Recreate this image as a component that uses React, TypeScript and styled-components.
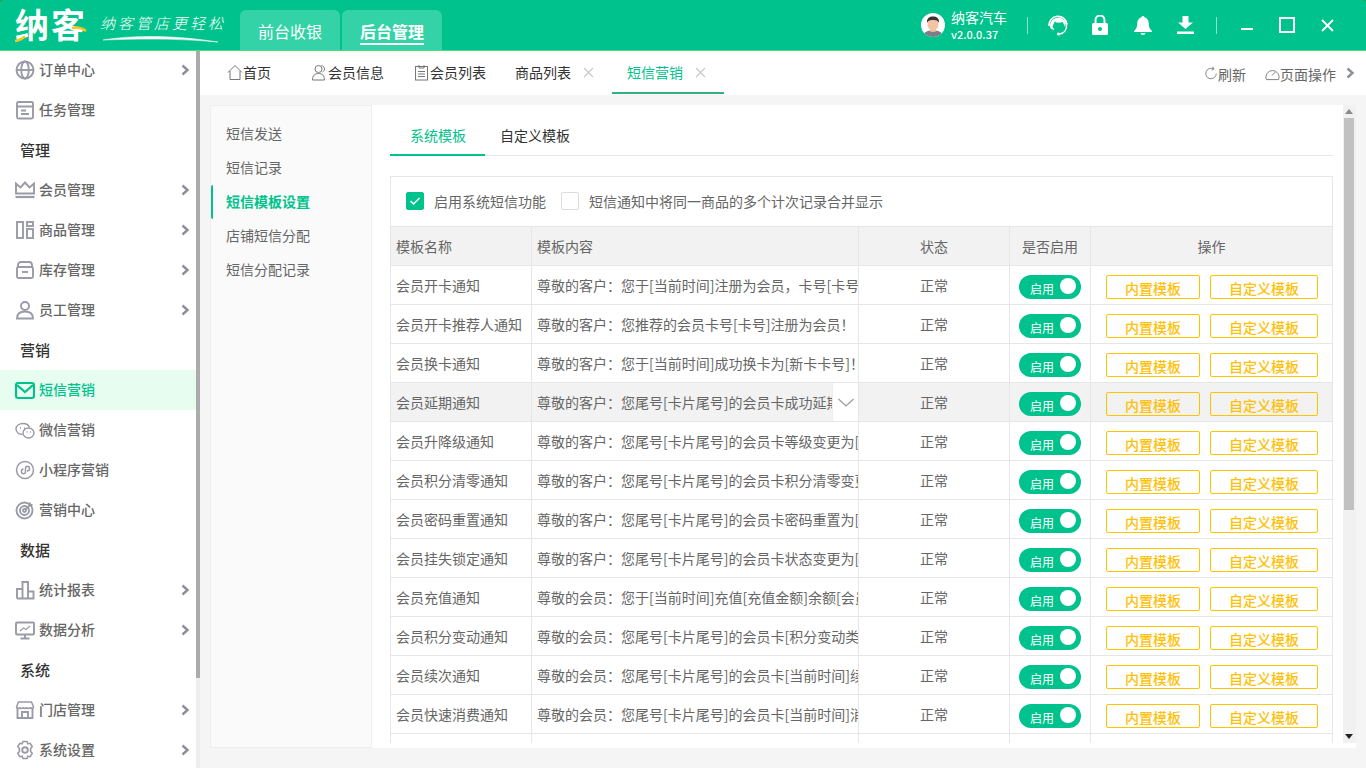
import React from 'react';
import styled, { createGlobalStyle } from 'styled-components';

const green = '#00c28c';
const line = '#e6e6e6';

const GlobalStyle = createGlobalStyle`
    html, body {
        margin: 0;
        padding: 0;
        height: 100%;
        overflow: hidden;
        background: #f5f5f5;
    }
    body {
        font-family: "Noto Sans CJK SC", "Liberation Sans", sans-serif;
        font-size: 14px;
        color: #666;
    }
    * {
        box-sizing: border-box;
    }
`;

const Page = styled.div`
    width: 1366px;
    height: 768px;
    display: flex;
    flex-direction: column;
    overflow: hidden;
`;

const HeaderShell = styled.div`
    background: #5f8a12;
    position: relative;
    z-index: 1;
`;

const Header = styled.header`
    height: 51px;
    display: flex;
    align-items: stretch;
    background: ${green};
    border-bottom: 1px solid #4bdc82;
    border-radius: 3px 3px 0 0;
    padding-left: 15px;
`;

const LogoBox = styled.div`
    position: relative;
    width: 225px;
    display: flex;
    align-items: center;
`;

const LogoText = styled.span`
    font-size: 34px;
    font-weight: 700;
    line-height: 50px;
    color: #fff;
    letter-spacing: 2px;
    width: 85px;
    flex: none;
    margin-top: -2px;
`;

const Slogan = styled.span`
    font-size: 15px;
    font-style: italic;
    font-weight: 300;
    color: #fff;
    letter-spacing: 3px;
    white-space: nowrap;
    margin-top: -6px;
`;

const LogoMarks = styled.svg`
    position: absolute;
    left: 0;
    top: 0;
`;

const ModeTabs = styled.div`
    display: flex;
    align-items: flex-end;
    gap: 2px;
`;

const ModeTab = styled.div<{ $on?: boolean }>`
    width: 100px;
    height: 40px;
    border-radius: 6px 6px 0 0;
    background: #33d3a7;
    color: #fff;
    font-size: 16px;
    font-weight: ${p => (p.$on ? 700 : 400)};
    display: flex;
    align-items: center;
    justify-content: center;
    span {
        display: block;
        line-height: 24px;
        border-bottom: 2px solid ${p => (p.$on ? '#fff' : 'transparent')};
        margin-top: 3px;
    }
`;

const HeaderRight = styled.div`
    margin-left: auto;
    display: flex;
    align-items: center;
    color: #fff;
    padding-right: 9px;
`;

const UserBlock = styled.div`
    display: flex;
    align-items: center;
    gap: 6px;
    margin-right: 20px;
`;

const UserText = styled.div`
    display: flex;
    flex-direction: column;
`;

const UserName = styled.span`
    font-size: 14px;
    line-height: 20px;
    margin-top: -1px;
`;

const UserVersion = styled.span`
    font-size: 11px;
    font-weight: 500;
    line-height: 15px;
`;

const Divider = styled.span<{ $ml?: number }>`
    width: 1px;
    height: 17px;
    background: rgba(255, 255, 255, 0.55);
    margin-left: ${p => p.$ml ?? 0}px;
`;

const HeadIcon = styled.span<{ $w: number }>`
    width: ${p => p.$w}px;
    display: flex;
    justify-content: center;
`;

const Body = styled.div`
    flex: 1;
    display: flex;
    min-height: 0;
`;

const Sidebar = styled.aside`
    width: 200px;
    flex: none;
    display: flex;
    background: #fff;
`;

const SideNav = styled.nav`
    width: 196px;
    margin-top: -1px;
`;

const SideItem = styled.div<{ $on?: boolean }>`
    height: 40px;
    display: flex;
    align-items: center;
    padding: 0 6px 0 15px;
    color: ${p => (p.$on ? green : '#666')};
    background: ${p => (p.$on ? '#e6fdf0' : 'transparent')};
    font-weight: 500;
    font-size: 14px;
    svg.lead {
        margin-right: 4px;
        flex: none;
    }
    svg.more {
        margin-left: auto;
    }
`;

const SideLabel = styled.span`
    margin-bottom: 2px;
`;

const SideGroup = styled.div`
    height: 40px;
    display: flex;
    align-items: center;
    padding: 0 0 2px 20px;
    font-size: 15px;
    font-weight: 500;
    color: #333;
`;

const SideTrack = styled.div`
    width: 4px;
    background: #eee;
`;

const SideThumb = styled.div`
    height: 627px;
    background: #ababab;
`;

const Main = styled.main`
    flex: 1;
    min-width: 0;
    display: flex;
    flex-direction: column;
`;

const TabBar = styled.div`
    height: 44px;
    background: #fff;
    display: flex;
    padding-left: 12px;
    flex: none;
`;

const PageTab = styled.div<{ $on?: boolean; $pr?: number }>`
    height: 43px;
    display: flex;
    align-items: center;
    padding: 1px ${p => p.$pr ?? 15}px 0 15px;
    color: ${p => (p.$on ? green : '#333')};
    border-bottom: 2px solid ${p => (p.$on ? '#2fb27c' : 'transparent')};
    white-space: nowrap;
    svg.close {
        margin-left: 12px;
    }
`;

const TabTools = styled.div`
    margin-left: auto;
    display: flex;
    align-items: center;
    color: #666;
    padding-right: 11px;
`;

const ToolItem = styled.span<{ $mr?: number }>`
    display: flex;
    align-items: center;
    margin-right: ${p => p.$mr ?? 21}px;
    padding-top: 1px;
`;

const Content = styled.div`
    flex: 1;
    min-height: 0;
    display: flex;
    padding: 10px 10px 20px 10px;
`;

const SubMenu = styled.div`
    width: 162px;
    flex: none;
    background: #fafafa;
    border: 1px solid #eee;
    padding-top: 11px;
`;

const SubItem = styled.div<{ $on?: boolean }>`
    height: 34px;
    display: flex;
    align-items: center;
    padding: 0 0 2px 13px;
    color: ${p => (p.$on ? green : '#666')};
    font-weight: ${p => (p.$on ? 700 : 400)};
    border-left: 2px solid ${p => (p.$on ? green : 'transparent')};
    border-radius: 2px;
`;

const Panel = styled.div`
    flex: 1;
    min-width: 0;
    background: #fff;
    display: flex;
    padding-bottom: 5px;
`;

const ScrollArea = styled.div`
    flex: 1;
    min-width: 0;
    overflow: hidden;
    padding: 0 10px 0 18px;
`;

const SubTabs = styled.div`
    height: 51px;
    display: flex;
    border-bottom: 1px solid ${line};
`;

const SubTab = styled.div<{ $on?: boolean }>`
    height: 51px;
    padding: 23px 19px 13px ${p => (p.$on ? 20 : 15)}px;
    display: flex;
    align-items: center;
    color: ${p => (p.$on ? green : '#333')};
    border-bottom: 2px solid ${p => (p.$on ? green : 'transparent')};
`;

const Card = styled.div`
    margin-top: 20px;
    border: 1px solid ${line};
    border-bottom: 0;
`;

const OptionRow = styled.div`
    height: 50px;
    display: flex;
    align-items: center;
    padding: 0 0 1px 15px;
    border-bottom: 1px solid ${line};
`;

const Check = styled.span<{ $on?: boolean }>`
    width: 18px;
    height: 18px;
    flex: none;
    border-radius: 2px;
    border: 1px solid ${p => (p.$on ? green : '#dcdcdc')};
    background: ${p => (p.$on ? green : '#fff')};
    display: flex;
    align-items: center;
    justify-content: center;
    margin-right: 10px;
`;

const OptionLabel = styled.span`
    margin-right: 15px;
    color: #666;
`;

const Row = styled.div<{ $head?: boolean; $hover?: boolean }>`
    display: grid;
    grid-template-columns: 141px 327px 151px 81px 241px;
    height: 39px;
    background: ${p => (p.$head || p.$hover ? '#f2f2f2' : '#fff')};
    border-bottom: 1px solid ${line};
`;

const Cell = styled.div<{ $center?: boolean; $last?: boolean }>`
    position: relative;
    display: flex;
    align-items: center;
    justify-content: ${p => (p.$center ? 'center' : 'flex-start')};
    padding: 0 5px;
    overflow: hidden;
    white-space: nowrap;
    border-right: ${p => (p.$last ? '0' : `1px solid ${line}`)};
    color: #666;
`;

const ActionCell = styled(Cell)`
    align-items: flex-start;
    padding: 9px 0 0 15px;
    gap: 10px;
`;

const ToggleCell = styled(Cell)`
    align-items: flex-start;
    padding: 9px 0 0 9px;
`;

const Toggle = styled.span`
    width: 62px;
    height: 24px;
    border-radius: 12px;
    background: ${green};
    color: #fff;
    font-size: 12px;
    display: flex;
    align-items: center;
    padding: 3px 0 0 11px;
    position: relative;
    &::after {
        content: '';
        position: absolute;
        right: 5px;
        top: 3px;
        width: 16px;
        height: 16px;
        border-radius: 50%;
        background: #fff;
    }
`;

const OutlineButton = styled.span<{ $w: number }>`
    width: ${p => p.$w}px;
    height: 24px;
    border: 1px solid #ffc400;
    border-radius: 2px;
    color: #ffc107;
    font-weight: 500;
    display: flex;
    align-items: center;
    justify-content: center;
    padding-top: 1px;
    flex: none;
`;

const ExpandBox = styled.span`
    position: absolute;
    right: 0;
    top: 0;
    bottom: 0;
    width: 26px;
    background: #fff;
    border-left: 1px solid #eee;
    display: flex;
    align-items: center;
    justify-content: center;
`;

const Scrollbar = styled.div`
    width: 13px;
    flex: none;
    background: #f1f1f1;
    display: flex;
    flex-direction: column;
`;

const ScrollButton = styled.span`
    height: 13px;
    display: flex;
    align-items: center;
    justify-content: center;
    padding-right: 2px;
    flex: none;
`;

const ScrollThumb = styled.div`
    height: 392px;
    width: 10px;
    margin-left: 1px;
    background: #c1c1c1;
`;

const ScrollGap = styled.div`
    flex: 1;
`;

const ic = { fill: 'none', stroke: '#9a9aa8', strokeWidth: 1.9 };

const Lead = ({ children, color }: { children: React.ReactNode; color?: string }) => (
    <svg className="lead" width="20" height="20" viewBox="0 0 20 20" {...ic} stroke={color ?? ic.stroke}>
        {children}
    </svg>
);

const Chevron = () => (
    <svg className="more" width="10" height="12" viewBox="0 0 10 12" fill="none" stroke="#8f8f99" strokeWidth="2.4">
        <path d="M2.500 1.500 7.500 6l-5 4.500" />
    </svg>
);

const sideIcons: Record<string, React.ReactNode> = {
    globe: <><circle cx="10" cy="10" r="8.500" /><ellipse cx="10" cy="10" rx="3.800" ry="8.500" /><path d="M1.500 10h17" /></>,
    task: <><rect x="2" y="2" width="16" height="16.500" rx="1.500" /><path d="M2 6.500h16M6 10.500h5M6 14h8" /></>,
    crown: <><path d="M1 13.500V3.500l4.500 4L10 2.500l4.500 5 4.500-4v10z" /><path d="M0.500 17h19" strokeWidth="2.200" /></>,
    goods: <><rect x="2" y="2" width="6" height="16" /><rect x="12" y="2" width="6" height="4" /><rect x="12" y="9" width="6" height="9" /></>,
    stock: <><path d="M3 7V5a3 3 0 0 1 3-3h8a3 3 0 0 1 3 3v2" /><rect x="2" y="7" width="16" height="11" rx="1.500" /><path d="M7 12h6" /></>,
    staff: <><circle cx="10" cy="6" r="4" /><path d="M2 18.500c0-4.500 3-7 8-7s8 2.500 8 7z" /></>,
    mail: <><rect x="1" y="3" width="18" height="15" rx="2" strokeWidth="2.200" /><path d="M2 5l8 7 8-7" strokeWidth="2.200" /></>,
    wechat: <><path d="M7.500 14.500c-3.500 0-6.500-2.300-6.500-5.500s3-5.500 7-5.500c3.200 0 5.700 1.500 6.500 4" strokeWidth="1.400" /><ellipse cx="13.500" cy="13" rx="5.500" ry="5" strokeWidth="1.400" /><path d="M5 8h1M9 8h1M11.500 12h1M15 12h1" strokeWidth="1.400" /></>,
    mini: <><circle cx="10" cy="10" r="8.500" strokeWidth="1.500" /><path d="M6.500 11.500c0 3 4 3 4 0v-3c0-3 4-3 4 0 0 2-1.500 2.500-2.500 2.500M6.500 11.500c0-1.500 1-2.500 2-2.500" strokeWidth="1.500" /></>,
    target: <><circle cx="9.500" cy="10.500" r="8" /><circle cx="9.500" cy="10.500" r="4.500" /><circle cx="9.500" cy="10.500" r="1.500" /><path d="M10 10 15.500 4.500M15 2.500v2.500h2.500" /></>,
    chart: <><path d="M2 18.500V9h5.500v9.500M7.500 18.500V2h5.500v16.500M13 18.500v-7h5.500v7zM2 18.500h16" /></>,
    monitor: <><rect x="1" y="2.500" width="18" height="12" rx="1" /><path d="M10 14.500v4M5.500 18.500h9" /><path d="M5 11l3.500-3 2.500 1.500L15 6" strokeWidth="1.200" /></>,
    store: <><path d="M2.500 7.500V18h15V7.500" /><path d="M3.500 2h13l2 5c0 2-3 2-3 0 0 2-4 2-4 0 0 2-3 2-3 0 0 2-4 2-4 0 0 2-3 2-3 0z" strokeWidth="1.500" /><path d="M7 18v-6h6v6" /></>,
    gear: <><path d="M8 1.500h4l.8 2.300 2.400-.5 2 3.400-1.600 1.800v3l1.600 1.800-2 3.400-2.400-.5-.8 2.300H8l-.8-2.300-2.400.5-2-3.400 1.600-1.800v-3L2.800 6.700l2-3.400 2.400.5z" strokeWidth="1.600" /><circle cx="10" cy="10" r="2.800" /></>,
};

type SideRow = { group?: string; label?: string; icon?: string; more?: boolean; on?: boolean };

const sideRows: SideRow[] = [
    { label: '订单中心', icon: 'globe', more: true },
    { label: '任务管理', icon: 'task' },
    { group: '管理' },
    { label: '会员管理', icon: 'crown', more: true },
    { label: '商品管理', icon: 'goods', more: true },
    { label: '库存管理', icon: 'stock', more: true },
    { label: '员工管理', icon: 'staff', more: true },
    { group: '营销' },
    { label: '短信营销', icon: 'mail', on: true },
    { label: '微信营销', icon: 'wechat' },
    { label: '小程序营销', icon: 'mini' },
    { label: '营销中心', icon: 'target' },
    { group: '数据' },
    { label: '统计报表', icon: 'chart', more: true },
    { label: '数据分析', icon: 'monitor', more: true },
    { group: '系统' },
    { label: '门店管理', icon: 'store', more: true },
    { label: '系统设置', icon: 'gear', more: true },
];

const customer = '尊敬的客户：';
const member = '尊敬的会员：';
const tail = '您尾号[卡片尾号]的会员卡';

const templates = [
    ['会员开卡通知', customer + '您于[当前时间]注册为会员，卡号[卡号]，初始密码'],
    ['会员开卡推荐人通知', customer + '您推荐的会员卡号[卡号]注册为会员！'],
    ['会员换卡通知', customer + '您于[当前时间]成功换卡为[新卡卡号]！'],
    ['会员延期通知', customer + tail + '成功延期至[到期时间]'],
    ['会员升降级通知', customer + tail + '等级变更为[会员等级]'],
    ['会员积分清零通知', customer + tail + '积分清零变更为0'],
    ['会员密码重置通知', customer + tail + '密码重置为[新密码]'],
    ['会员挂失锁定通知', customer + tail + '状态变更为[卡片状态]'],
    ['会员充值通知', member + '您于[当前时间]充值[充值金额]余额[会员余额]'],
    ['会员积分变动通知', member + tail + '[积分变动类型]积分'],
    ['会员续次通知', member + tail + '[当前时间]续次成功'],
    ['会员快速消费通知', member + tail + '[当前时间]消费成功'],
];

const TabClose = () => (
    <svg className="close" width="11" height="11" viewBox="0 0 11 11" stroke="#c8c8c8" strokeWidth="1.200">
        <path d="M1 1l9 9M10 1l-9 9" />
    </svg>
);

const Thin = ({ children, w = 16 }: { children: React.ReactNode; w?: number }) => (
    <svg width={w} height="17" viewBox="0 0 16 17" fill="none" stroke="#777" strokeWidth="1">
        {children}
    </svg>
);

const App = () => {
    return (
        <Page>
            <GlobalStyle />
            <HeaderShell>
                <Header>
                    <LogoBox>
                        <LogoText>纳客</LogoText>
                        <Slogan>纳客管店更轻松</Slogan>
                        <LogoMarks width="225" height="50" viewBox="0 0 225 50" fill="none">
                            <path d="M0 41c4-.5 7-2 10-4.500" stroke="#f7c325" strokeWidth="2.500" />
                            <path d="M57 28c5-1 10 0 14 3" stroke="#f7c325" strokeWidth="2.500" />
                            <path d="M88 40c30-5 70-5 115 2-45-4-80-3-115-2z" fill="#fff" stroke="#fff" strokeWidth=".5" />
                        </LogoMarks>
                    </LogoBox>
                    <ModeTabs>
                        <ModeTab><span>前台收银</span></ModeTab>
                        <ModeTab $on><span>后台管理</span></ModeTab>
                    </ModeTabs>
                    <HeaderRight>
                        <UserBlock>
                            <svg width="24" height="24" viewBox="0 0 24 24">
                                <clipPath id="av"><circle cx="12" cy="12" r="12" /></clipPath>
                                <g clipPath="url(#av)">
                                    <rect width="24" height="24" fill="#fff" />
                                    <path d="M2 24c0-5 4-6.500 10-6.500S22 19 22 24z" fill="#7d7f88" />
                                    <rect x="9.500" y="14" width="5" height="5" fill="#eab896" />
                                    <ellipse cx="12" cy="11.500" rx="5.500" ry="6" fill="#f2c4a2" />
                                    <path d="M6 10c-.5-5 2.500-6.500 6-6.500s6.500 1.500 6 6.500c-1-2-2-3-6-3s-5 1-6 3z" fill="#3a3330" />
                                </g>
                            </svg>
                            <UserText>
                                <UserName>纳客汽车</UserName>
                                <UserVersion>v2.0.0.37</UserVersion>
                            </UserText>
                        </UserBlock>
                        <Divider />
                        <HeadIcon $w={60}>
                            <svg width="20" height="22" viewBox="0 0 20 22" fill="none" stroke="#fff" strokeWidth="1.600">
                                <path d="M1 12A9 9 0 0 1 19 10.500" />
                                <path d="M2 12.500C2 7 6 3.500 10.500 3.500c3.500 0 6.500 2.500 7.500 6l-1.500 3c-.5-2-1-3.500-2-4.500-2.500 1-5.500 1-8-.5-.5 2-1.500 3.500-2 5l2 3.500C4 15.500 2 15 2 12.500z" fill="#fff" stroke="none" />
                                <path d="M18.500 10.500c.5 5.500-2.500 9-7 9.500" />
                                <circle cx="10.500" cy="20" r="1.600" fill="#fff" stroke="none" />
                            </svg>
                        </HeadIcon>
                        <HeadIcon $w={24}>
                            <svg width="16" height="20" viewBox="0 0 16 20">
                                <path d="M1.500 8h13A1.500 1.500 0 0 1 16 9.500v9a1.500 1.500 0 0 1-1.500 1.500h-13A1.500 1.500 0 0 1 0 18.500v-9A1.500 1.500 0 0 1 1.500 8z" fill="#fff" />
                                <path d="M3.500 8V5a4.500 4.500 0 0 1 9 0v3" fill="none" stroke="#fff" strokeWidth="2" />
                                <circle cx="8" cy="14" r="2" fill={green} />
                            </svg>
                        </HeadIcon>
                        <HeadIcon $w={62}>
                            <svg width="18" height="19" viewBox="0 0 18 19" fill="#fff">
                                <path d="M9 0c.8 0 1.300.5 1.400 1.300C13 2 14.800 4.300 14.800 7.500c0 4 1 5.500 3.200 7.500v1H0v-1c2.200-2 3.200-3.500 3.200-7.500 0-3.200 1.800-5.500 4.400-6.200C7.700.5 8.200 0 9 0z" />
                                <path d="M6.500 17h5c-.3 1.200-1.300 2-2.500 2s-2.200-.8-2.500-2z" />
                            </svg>
                        </HeadIcon>
                        <HeadIcon $w={22}>
                            <svg width="17" height="18" viewBox="0 0 17 18" fill="#fff">
                                <path d="M5.500 0h6v6.500H16L8.500 13 1 6.500h4.500z" />
                                <rect y="15.500" width="17" height="2.500" />
                            </svg>
                        </HeadIcon>
                        <Divider $ml={20} />
                        <HeadIcon $w={60}>
                            <svg width="12" height="12" viewBox="0 0 12 12" style={{ marginTop: 10 }}>
                                <rect y="4" width="12" height="2" fill="#fff" />
                            </svg>
                        </HeadIcon>
                        <HeadIcon $w={20}>
                            <svg width="16" height="16" viewBox="0 0 16 16" fill="none" stroke="#fff" strokeWidth="2">
                                <rect x="1" y="1" width="14" height="14" />
                            </svg>
                        </HeadIcon>
                        <HeadIcon $w={60}>
                            <svg width="13" height="13" viewBox="0 0 13 13" stroke="#fff" strokeWidth="1.800">
                                <path d="M1 1l11 11M12 1 1 12" />
                            </svg>
                        </HeadIcon>
                    </HeaderRight>
                </Header>
            </HeaderShell>
            <Body>
                <Sidebar>
                    <SideNav>
                        {sideRows.map((r, i) =>
                            r.group ? (
                                <SideGroup key={i}>{r.group}</SideGroup>
                            ) : (
                                <SideItem key={i} $on={r.on}>
                                    <Lead color={r.on ? green : undefined}>{sideIcons[r.icon as string]}</Lead>
                                    <SideLabel>{r.label}</SideLabel>
                                    {r.more && <Chevron />}
                                </SideItem>
                            )
                        )}
                    </SideNav>
                    <SideTrack>
                        <SideThumb />
                    </SideTrack>
                </Sidebar>
                <Main>
                    <TabBar>
                        <PageTab $pr={25}>
                            <Thin><path d="M1 8.500 8 1.500l7 7M3 7v8.500h10V7" /></Thin>
                            首页
                        </PageTab>
                        <PageTab>
                            <Thin w={17}><circle cx="7" cy="5" r="3.500" /><path d="M1 16c0-4.500 2.500-6.500 6-6.500s6 2 6 6.500zM10 1.500c2 .5 3 2 3 3.500s-1 2.500-2 3" /></Thin>
                            会员信息
                        </PageTab>
                        <PageTab $pr={14}>
                            <Thin><rect x="1.500" y="2.500" width="12" height="13.500" /><path d="M5 1v3h5V1M4 7.500h7M4 10h7M4 12.500h7" /></Thin>
                            会员列表
                        </PageTab>
                        <PageTab $pr={18}>
                            商品列表
                            <TabClose />
                        </PageTab>
                        <PageTab $on $pr={18}>
                            短信营销
                            <TabClose />
                        </PageTab>
                        <TabTools>
                            <ToolItem $mr={19}>
                                <Thin w={14}><path d="M14 8.500A6 6 0 1 1 11 3.300M10 .8l1.200 2.600L8.600 4.800" /></Thin>
                                刷新
                            </ToolItem>
                            <ToolItem $mr={9}>
                                <Thin w={15}><path d="M1.500 15a7 7 0 1 1 13 0zM7.500 10.500 11 7" /></Thin>
                                页面操作
                            </ToolItem>
                            <Chevron />
                        </TabTools>
                    </TabBar>
                    <Content>
                        <SubMenu>
                            <SubItem>短信发送</SubItem>
                            <SubItem>短信记录</SubItem>
                            <SubItem $on>短信模板设置</SubItem>
                            <SubItem>店铺短信分配</SubItem>
                            <SubItem>短信分配记录</SubItem>
                        </SubMenu>
                        <Panel>
                            <ScrollArea>
                                <SubTabs>
                                    <SubTab $on>系统模板</SubTab>
                                    <SubTab>自定义模板</SubTab>
                                </SubTabs>
                                <Card>
                                    <OptionRow>
                                        <Check $on>
                                            <svg width="12" height="10" viewBox="0 0 12 10" fill="none" stroke="#fff" strokeWidth="1.500">
                                                <path d="M1.500 5l3 3 6-6" />
                                            </svg>
                                        </Check>
                                        <OptionLabel>启用系统短信功能</OptionLabel>
                                        <Check />
                                        <OptionLabel>短信通知中将同一商品的多个计次记录合并显示</OptionLabel>
                                    </OptionRow>
                                    <Row $head>
                                        <Cell>模板名称</Cell>
                                        <Cell>模板内容</Cell>
                                        <Cell $center>状态</Cell>
                                        <Cell $center>是否启用</Cell>
                                        <Cell $center $last>操作</Cell>
                                    </Row>
                                    {templates.map((t, i) => (
                                        <Row key={t[0]} $hover={i === 3}>
                                            <Cell>{t[0]}</Cell>
                                            <Cell>
                                                {t[1]}
                                                {i === 3 && (
                                                    <ExpandBox>
                                                        <svg width="16" height="9" viewBox="0 0 16 9" fill="none" stroke="#999" strokeWidth="1.200">
                                                            <path d="M.5 1 8 8l7.500-7" />
                                                        </svg>
                                                    </ExpandBox>
                                                )}
                                            </Cell>
                                            <Cell $center>正常</Cell>
                                            <ToggleCell>
                                                <Toggle>启用</Toggle>
                                            </ToggleCell>
                                            <ActionCell $last>
                                                <OutlineButton $w={94}>内置模板</OutlineButton>
                                                <OutlineButton $w={108}>自定义模板</OutlineButton>
                                            </ActionCell>
                                        </Row>
                                    ))}
                                    <Row>
                                        <Cell />
                                        <Cell />
                                        <Cell />
                                        <Cell />
                                        <Cell $last />
                                    </Row>
                                </Card>
                            </ScrollArea>
                            <Scrollbar>
                                <ScrollButton>
                                    <svg width="8" height="5" viewBox="0 0 8 5"><path d="M4 0l4 5H0z" fill="#8a8a8a" /></svg>
                                </ScrollButton>
                                <ScrollThumb />
                                <ScrollGap />
                                <ScrollButton>
                                    <svg width="8" height="5" viewBox="0 0 8 5"><path d="M0 0h8L4 5z" fill="#222" /></svg>
                                </ScrollButton>
                            </Scrollbar>
                        </Panel>
                    </Content>
                </Main>
            </Body>
        </Page>
    );
};

export default App;
